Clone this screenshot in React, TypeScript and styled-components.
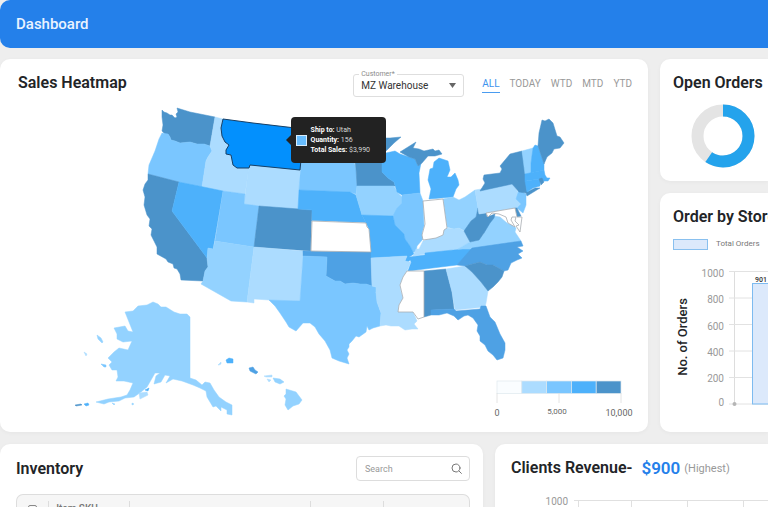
import React from "react";
import styled, { createGlobalStyle } from "styled-components";

const GlobalStyle = createGlobalStyle`
  *, *::before, *::after { box-sizing: border-box; }
  body { margin: 0; background: #eeeeee; }
  body, button, input, select { font-family: Roboto, "Liberation Sans", sans-serif; }
`;

const Shell = styled.div`
  height: 100vh;
  overflow: hidden;
  display: flex;
  flex-direction: column;
  gap: 12px;
  color: #222427;
`;

const TopBar = styled.header`
  flex: none;
  height: 48px;
  margin-bottom: -1px;
  padding: 0 16px;
  display: flex;
  align-items: center;
  background: #2480ea;
  color: #eaf3ff;
  border-radius: 10px 0 0 10px;
`;

const PageTitle = styled.h1`
  margin: 0;
  font-size: 15px;
  font-weight: 500;
`;

const Row = styled.div<{ $columns: string }>`
  flex: none;
  display: grid;
  grid-template-columns: ${(p) => p.$columns};
  gap: 12px;
`;

const Stack = styled.div`
  display: grid;
  grid-template-rows: auto 1fr;
  gap: 12px;
  min-width: 0;
`;

const Card = styled.section<{ $cut?: boolean }>`
  min-width: 0;
  overflow: hidden;
  background: #ffffff;
  border-radius: ${(p) => (p.$cut ? "10px 0 0 10px" : "10px")};
  box-shadow: 0 1px 4px rgba(0, 0, 0, 0.04);
  white-space: nowrap;
`;

const CardHead = styled.div`
  display: flex;
  align-items: flex-start;
  padding: 12px 16px 0 18px;
`;

const CardTitle = styled.h2`
  margin: 0;
  font-size: 16px;
  line-height: 24px;
  font-weight: 600;
`;

const Field = styled.div`
  position: relative;
  width: 111px;
  margin: 3px 18px 0 auto;
`;

const FieldLabel = styled.label`
  position: absolute;
  top: -5px;
  left: 6px;
  padding: 0 2px;
  background: #ffffff;
  color: #8b8b8b;
  font-size: 7px;
  line-height: 10px;
`;

const Select = styled.select`
  display: block;
  width: 100%;
  height: 23px;
  padding: 0 24px 0 7px;
  appearance: none;
  border: 1px solid #dedede;
  border-radius: 3px;
  background: #ffffff;
  color: #333333;
  font-size: 10px;
`;

const Caret = styled.svg`
  position: absolute;
  right: 8px;
  top: 9px;
  width: 7px;
  height: 5px;
  pointer-events: none;
`;

const Tabs = styled.nav`
  display: flex;
  gap: 10px;
  margin-top: 4px;
`;

const Tab = styled.button<{ $active?: boolean }>`
  height: 18px;
  padding: 0;
  border: 0;
  border-bottom: 1px solid ${(p) => (p.$active ? "#4a9cf0" : "transparent")};
  background: none;
  color: ${(p) => (p.$active ? "#3d93ee" : "#999999")};
  font-size: 10px;
  line-height: 16px;
`;

const MapArea = styled.div`
  position: relative;
  margin-top: 7px;
  padding-bottom: 14px;
`;

const MapSvg = styled.svg`
  display: block;
  width: 100%;
  height: auto;
`;

const Tooltip = styled.div`
  position: absolute;
  left: 45%;
  top: 4%;
  width: 95px;
  height: 46px;
  display: flex;
  align-items: center;
  gap: 4px;
  margin-left: -1px;
  padding: 0 5px;
  border-radius: 4px;
  background: #222222;
  color: #d6d6d6;
  font-size: 7px;
  line-height: 10px;
  &::before {
    content: "";
    position: absolute;
    left: -5px;
    top: 18px;
    border: 5px solid transparent;
    border-left: 0;
    border-right-color: #222222;
  }
  p { margin: 0; }
  b { color: #ffffff; font-weight: 700; }
`;

const Swatch = styled.span`
  width: 11px;
  height: 11px;
  background: #67bdff;
  border: 1px solid #d8ecfb;
`;

const palette = {
  a: "#acdcff",
  b: "#93d2ff",
  c: "#7ac6ff",
  d: "#4db1fb",
  e: "#4ea1e4",
  f: "#4b93ca",
  w: "#ffffff",
};

type Region = [keyof typeof palette, string];

const regions: Region[] = [
  ["f", "162 110 164 112 167 113 170 115 172 115 175 118 177 117 176 114 178 112 177 108 190 112 215 117 210 146 204 144 197 144 190 142 180 143 175 141 171 140 170 137 168 134 165 134 162 131 163 125 162 117"],
  ["c", "162 133 168 134 170 137 171 140 175 141 180 143 190 142 197 144 204 144 210 146 212 151 208 157 206 161 202 187 179 182 148 174 149 165 152 158 155 151 159 139"],
  ["a", "215 117 223 119 221 128 222 136 225 142 229 145 226 152 231 155 233 164 237 168 249 167 245 194 223 191 202 187 206 161 208 157 212 151 210 146"],
  ["a", "249 164 300 169 298 210 259 206 244 204"],
  ["f", "148 174 179 182 172 211 207 258 208 267 205 271 203 281 181 280 180 274 177 269 174 268 173 264 168 262 166 259 157 254 157 247 154 241 151 235 152 229 149 226 150 219 147 215 144 205 145 197 143 190 145 184 148 180"],
  ["d", "179 182 223 191 213 249 208 248 207 258 172 211"],
  ["c", "223 191 245 194 244 204 259 206 254 247 215 241"],
  ["f", "259 206 312 210 311 251 254 247"],
  ["b", "215 241 254 247 247 302 231 301 201 284 203 281 205 271 208 267 207 258 208 248 213 249"],
  ["a", "254 247 303 251 300 301 269 300 254 299 254 303 247 302"],
  ["c", "303 129 350 131 352 143 354 162 300 161"],
  ["c", "301 161 354 162 356 169 357 186 356 194 350 192 299 190"],
  ["d", "299 190 350 192 356 195 362 215 366 223 312 221 312 210 298 209"],
  ["w", "312 221 366 223 367 227 369 229 371 252 311 251"],
  ["e", "303 251 371 252 372 286 366 284 360 284 353 283 345 284 340 281 335 281 326 276 327 257 303 256"],
  ["c", "303 256 327 257 326 276 335 281 340 281 345 284 353 283 360 284 366 284 372 286 376 287 377 302 381 313 380 326 373 328 369 330 367 326 366 332 359 337 356 336 352 341 349 344 349 347 347 350 349 354 347 358 349 364 339 361 332 358 330 350 325 341 319 334 315 327 310 323 303 323 296 331 289 327 286 322 280 313 275 306 269 300 300 301"],
  ["f", "349 131 366 134 372 137 382 138 390 138 401 137 394 143 387 150 383 154 382 172 388 178 394 182 395 186 357 186 356 169 352 143"],
  ["b", "357 186 394 186 397 192 402 197 402 203 397 208 396 214 393 216 362 215 356 195"],
  ["d", "386 153 395 151 400 154 409 157 415 159 418 166 421 163 419 173 420 193 402 195 397 192 394 182 388 178 382 172 382 162"],
  ["f", "400 152 408 147 416 142 413 148 419 149 424 151 433 149 435 151 439 150 442 154 435 156 428 156 422 163 418 166 415 159 409 157"],
  ["d", "439 158 448 161 450 170 447 177 451 177 455 173 458 180 459 185 456 189 453 197 429 199 431 189 428 180 430 169 433 168 434 162"],
  ["c", "402 195 420 193 423 201 424 226 422 233 423 239 417 246 416 252 413 252 410 246 405 239 404 234 395 225 393 216 397 208 402 203 402 197"],
  ["d", "362 215 393 216 395 225 404 234 405 239 410 246 414 254 409 257 411 259 408 262 405 261 407 256 371 258 371 252 369 229 366 223"],
  ["b", "443 199 453 197 459 200 465 197 475 190 478 208 476 217 471 221 465 231 459 228 454 229 447 227"],
  ["a", "423 241 432 238 437 237 440 230 447 228 454 229 459 228 464 231 470 242 458 249 425 254 413 256 416 249 419 249"],
  ["d", "409 257 425 255 425 253 472 248 471 252 457 265 408 271 411 262"],
  ["a", "371 258 407 256 405 261 411 262 407 271 403 277 400 285 401 293 376 293 376 287 372 286"],
  ["a", "376 292 401 292 403 298 399 305 398 312 413 312 417 321 414 324 418 329 412 329 405 330 399 326 391 326 386 325 380 326 381 313 377 302"],
  ["f", "424 271 446 269 452 292 454 309 431 310 431 315 424 317"],
  ["a", "446 269 465 266 472 272 481 282 488 291 486 303 485 307 455 310 452 292"],
  ["b", "458 249 470 242 477 240 483 235 488 222 494 216 500 217 507 223 512 225 516 228 515 232 521 241 472 249"],
  ["e", "472 248 521 241 523 246 517 247 523 251 518 254 522 258 517 260 511 263 508 270 504 271 493 265 487 265 480 262 465 266 457 265"],
  ["f", "465 266 480 262 487 265 493 265 504 271 502 277 498 282 493 287 488 291 481 282 472 272"],
  ["e", "431 310 454 309 456 311 480 309 481 306 486 306 490 317 495 322 500 334 505 343 505 350 503 358 497 360 493 355 488 351 485 345 480 341 480 336 477 331 478 325 473 318 468 315 464 316 458 320 454 316 447 313 439 315 431 315"],
  ["f", "478 208 479 214 486 213 487 217 495 214 494 218 490 223 484 233 479 240 470 242 464 231 471 221 476 217"],
  ["a", "475 190 512 184 519 193 516 199 521 204 517 208 479 214"],
  ["c", "519 190 526 194 526 205 523 213 517 208 521 204 516 199"],
  ["f", "515 208 517 208 521 216 517 217"],
  ["f", "480 191 485 183 483 179 484 175 500 173 502 169 500 166 510 154 522 151 525 165 527 192 535 188 540 188 527 196 526 193 519 192 512 184"],
  ["b", "522 151 533 148 532 157 531 163 531 173 525 174"],
  ["d", "533 148 535 145 538 146 544 164 544 170 531 173 531 163"],
  ["d", "525 174 544 170 545 175 547 178 550 178 548 181 544 181 540 179 525 181"],
  ["d", "525 181 540 179 540 186 533 188 527 192"],
  ["f", "539 179 542 178 544 182 541 185"],
  ["f", "538 146 539 133 542 120 545 121 549 119 553 123 557 136 560 137 564 143 560 148 554 149 552 153 547 157 544 164"],
  ["b", "125 312 133 311 138 306 147 305 153 302 158 304 161 307 166 307 174 312 180 314 187 314 190 317 190 378 196 380 202 385 205 382 210 383 214 390 219 397 226 402 232 405 232 415 227 414 227 410 221 407 221 411 216 406 213 407 207 397 206 391 200 388 193 385 182 381 173 379 166 383 170 376 165 375 161 382 154 384 156 376 160 373 155 373 151 380 147 387 141 392 134 397 125 398 119 401 109 402 104 404 96 402 108 399 121 397 127 395 130 390 133 383 124 381 116 381 118 377 117 370 112 370 109 365 112 362 108 358 114 352 119 348 128 350 132 341 123 342 117 339 117 334 114 328 125 326 128 331 133 332 129 322"],
  ["b", "97 335 101 338 103 342 102 343 98 339"],
  ["a", "84 352 87 354 86 356"],
  ["c", "101 364 106 365 106 367 104 367"],
  ["a", "139 393 147 392 148 395 140 399"],
  ["d", "145 390 149 388 148 391"],
  ["b", "112 403 115 404 114 405"],
  ["b", "132 403 134 404 132 405"],
  ["f", "75 405 81 404 82 405 76 406"],
  ["d", "84 404 88 403 89 405 86 406"],
  ["d", "226 360 229 358 233 359 233 363 227 363"],
  ["a", "218 365 221 362 221 364 219 365"],
  ["e", "249 368 253 367 255 370 258 372 256 374 250 371"],
  ["a", "264 376 272 375 272 377 266 377"],
  ["a", "267 379 271 380 269 382"],
  ["b", "273 378 280 379 284 382 280 384 275 382"],
  ["b", "286 389 296 392 302 400 299 404 293 406 288 410 285 405 286 399 284 396 286 394"],
];

const outlined = [
  "312 221 366 223 367 227 369 229 371 252 311 251",
  "423 201 443 199 447 228 444 230 443 235 436 238 430 239 423 240 422 235 425 224",
  "407 271 424 271 424 317 418 319 413 312 398 312 399 305 403 298 400 285 403 277",
  "486 213 515 208 517 217 522 217 520 232 516 226 519 225 515 221 516 217 512 217 511 220 515 227 508 223 506 217 499 214 492 213 488 217",
];

const Heatmap = () => (
  <MapSvg viewBox="0 104 648 314" role="img" aria-label="Sales by state">
    {regions.map(([tone, points], i) => (
      <polygon key={i} points={points} fill={palette[tone]} stroke={palette[tone]} strokeWidth={0.5} strokeLinejoin="round" />
    ))}
    {outlined.map((points) => (
      <polygon key={points} points={points} fill="#ffffff" stroke="#a8adb2" strokeWidth={0.8} strokeLinejoin="round" />
    ))}
    <polygon
      points="223 119 253 123 304 129 300 170 250 165 249 168 237 168 233 165 231 155 226 154 226 150 229 145 225 142 222 136 221 128"
      fill="#0390fd"
      stroke="#173f65"
      strokeWidth={1}
      strokeLinejoin="round"
    />
    {["#fafdff", palette.a, palette.c, palette.d, palette.f].map((fill, i) => (
      <rect key={fill} x={497 + i * 24.8} y={381} width={24.8} height={12.5} fill={fill} stroke="#dfe8ee" strokeWidth={0.7} />
    ))}
    <path d="M497 393v10M559 393v10M621 393v10" stroke="#dddddd" fill="none" strokeWidth={0.8} />
    <g fill="#666666" textAnchor="middle">
      <text x={497} y={416} fontSize={9}>0</text>
      <text x={557} y={414} fontSize={8}>5,000</text>
      <text x={619} y={416} fontSize={9}>10,000</text>
    </g>
  </MapSvg>
);

const Donut = styled.svg`
  display: block;
  width: 64px;
  height: 64px;
  margin: 9px 0 13px 31px;
`;

const Legend = styled.div`
  display: flex;
  align-items: center;
  gap: 8px;
  margin: 9px 0 0 13px;
  color: #777777;
  font-size: 8px;
  line-height: 12px;
  i { width: 35px; height: 11px; background: #dce9fb; border: 1px solid #89c0ef; }
`;

const StoreChart = styled.svg`
  display: block;
  width: 108px;
  height: 160px;
  margin-top: 10px;
`;

const OpenOrdersHead = styled.div`
  padding: 12px 0 0 13px;
`;

const SearchBox = styled.label`
  display: flex;
  align-items: center;
  width: 114px;
  height: 25px;
  margin-left: auto;
  padding: 0 7px 0 8px;
  border: 1px solid #dddddd;
  border-radius: 4px;
`;

const SearchInput = styled.input`
  flex: 1;
  min-width: 0;
  padding: 0;
  border: 0;
  outline: 0;
  background: none;
  color: #333333;
  font-size: 9px;
  &::placeholder { color: #999999; opacity: 1; }
`;

const SectionHead = styled.div`
  display: flex;
  align-items: center;
  padding: 12px 13px 0 16px;
`;

const TableFrame = styled.div`
  margin: 13px 13px 0 16px;
  padding-top: 6px;
  border: 1px solid #dddddd;
  border-bottom: 0;
  border-radius: 7px 7px 0 0;
  background: #f6f6f6;
`;

const Table = styled.table`
  width: 100%;
  table-layout: fixed;
  border-collapse: collapse;
  th {
    height: 16px;
    padding: 0 7px;
    text-align: left;
    color: #777777;
    font-size: 10px;
    line-height: 16px;
    font-weight: 500;
  }
  th + th { border-left: 1px solid #dddddd; }
`;

const CheckBox = styled.input`
  display: block;
  appearance: none;
  width: 9px;
  height: 9px;
  margin: 0 0 0 4px;
  border: 1px solid #888888;
  border-radius: 2px;
`;

const Amount = styled.strong`
  margin: 0 4px 0 9px;
  color: #2480ea;
  font-size: 17px;
  line-height: 24px;
  font-weight: 600;
`;

const Note = styled.span`
  color: #999999;
  font-size: 11px;
`;

const RevenueChart = styled.svg`
  display: block;
  width: 273px;
  height: 60px;
  margin-top: 8px;
`;

const levels = [1000, 800, 600, 400, 200, 0];

export default function App() {
  return (
    <Shell>
      <GlobalStyle />
      <TopBar>
        <PageTitle>Dashboard</PageTitle>
      </TopBar>

      <Row $columns="minmax(0, 6fr) minmax(0, 1fr)">
        <Card>
          <CardHead>
            <CardTitle>Sales Heatmap</CardTitle>
            <Field>
              <Select id="customer" defaultValue="mz">
                <option value="mz">MZ Warehouse</option>
              </Select>
              <FieldLabel htmlFor="customer">Customer*</FieldLabel>
              <Caret viewBox="0 0 7 5"><path d="M0 0h7L3.5 5z" fill="#666666" /></Caret>
            </Field>
            <Tabs aria-label="Period">
              <Tab $active>ALL</Tab>
              <Tab>TODAY</Tab>
              <Tab>WTD</Tab>
              <Tab>MTD</Tab>
              <Tab>YTD</Tab>
            </Tabs>
          </CardHead>
          <MapArea>
            <Heatmap />
            <Tooltip role="tooltip">
              <Swatch />
              <div>
                <p><b>Ship to:</b> Utah</p>
                <p><b>Quantity:</b> 156</p>
                <p><b>Total Sales:</b> $3,990</p>
              </div>
            </Tooltip>
          </MapArea>
        </Card>

        <Stack>
          <Card $cut>
            <OpenOrdersHead><CardTitle>Open Orders</CardTitle></OpenOrdersHead>
            <Donut viewBox="0 0 64 64" role="img" aria-label="Open orders share">
              <circle cx={32} cy={32} r={25.5} fill="none" stroke="#e4e4e4" strokeWidth={12} />
              <circle
                cx={32} cy={32} r={25.5} fill="none" stroke="#24a3ec" strokeWidth={12}
                pathLength={100} strokeDasharray="59.5 100" transform="rotate(-90 32 32)"
              />
            </Donut>
          </Card>
          <Card $cut>
            <OpenOrdersHead><CardTitle>Order by Store</CardTitle></OpenOrdersHead>
            <Legend><i />Total Orders</Legend>
            <StoreChart viewBox="660 260 108 160" role="img" aria-label="Orders by store">
              <path d="M734.5 271V404" stroke="#dddddd" />
              {levels.map((v, i) => (
                <g key={v}>
                  <path d={`M729 ${271.5 + i * 26.5}H768`} stroke="#e2e2e2" />
                  <text x={724} y={i === 5 ? 406 : 277 + i * 26.3} fontSize={10} fill="#999999" textAnchor="end">{v}</text>
                </g>
              ))}
              <circle cx={734.5} cy={404} r={2} fill="#b5b5b5" />
              <rect x={752.5} y={283.5} width={40} height={120.5} fill="#dce9fb" stroke="#7dbbf0" />
              <text x={755} y={282} fontSize={7} fontWeight={500} fill="#333333">901</text>
              <text transform="translate(687 337) rotate(-90)" fontSize={13} fontWeight={500} fill="#222427" textAnchor="middle">No. of Orders</text>
            </StoreChart>
          </Card>
        </Stack>
      </Row>

      <Row $columns="minmax(0, 23fr) minmax(0, 13fr)">
        <Card>
          <SectionHead>
            <CardTitle>Inventory</CardTitle>
            <SearchBox>
              <SearchInput type="text" placeholder="Search" aria-label="Search inventory" />
              <svg width="11" height="11" viewBox="0 0 11 11" fill="none" stroke="#777777" strokeLinecap="round">
                <circle cx="5" cy="5" r="4" />
                <path d="M8 8l2.4 2.4" />
              </svg>
            </SearchBox>
          </SectionHead>
          <TableFrame>
            <Table>
              <colgroup>
                <col style={{ width: "7%" }} />
                <col style={{ width: "18%" }} />
                <col style={{ width: "40%" }} />
                <col style={{ width: "16%" }} />
                <col />
              </colgroup>
              <thead>
                <tr>
                  <th><CheckBox type="checkbox" aria-label="Select all" /></th>
                  <th>Item SKU</th>
                  <th />
                  <th />
                  <th />
                </tr>
              </thead>
            </Table>
          </TableFrame>
        </Card>
        <Card $cut>
          <SectionHead>
            <CardTitle>Clients Revenue-</CardTitle>
            <Amount>$900</Amount>
            <Note>(Highest)</Note>
          </SectionHead>
          <RevenueChart viewBox="495 488 273 60" role="img" aria-label="Clients revenue">
            <path d="M574 500.5H768M578.5 500V548M631.5 500V548M687.5 500V548M743.5 500V548" stroke="#e0e0e0" fill="none" />
            <text x={568} y={505} fontSize={10} fill="#999999" textAnchor="end">1000</text>
          </RevenueChart>
        </Card>
      </Row>
    </Shell>
  );
}
